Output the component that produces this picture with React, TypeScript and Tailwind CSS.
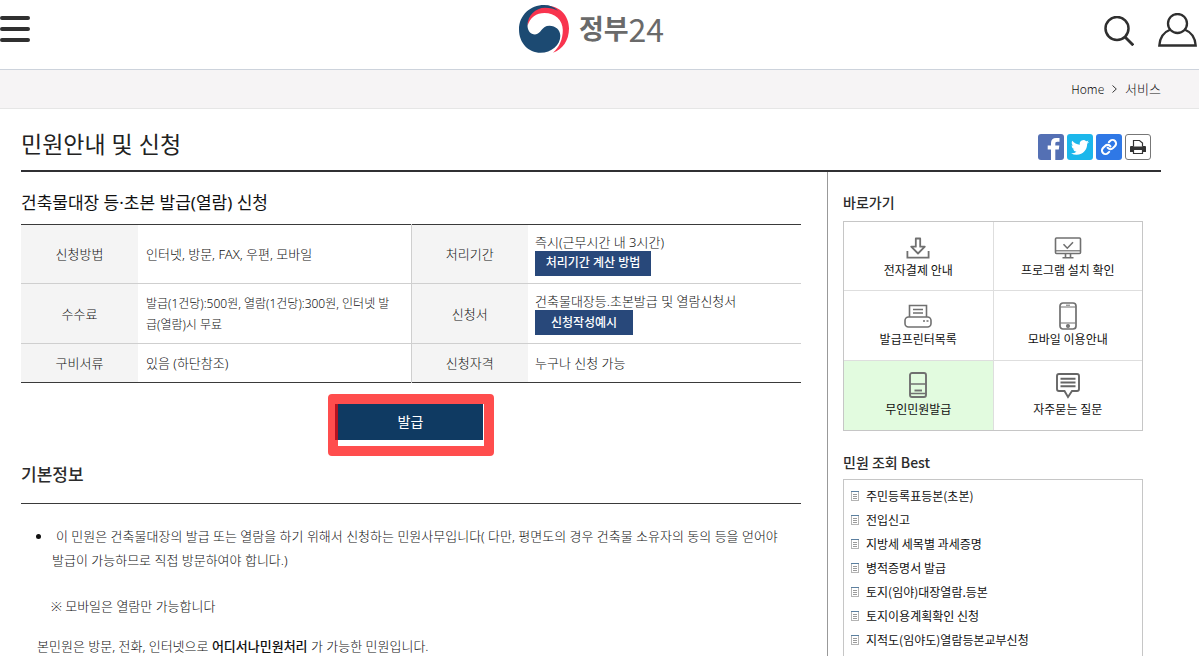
import React from "react";

const tiles = [
  { label: "전자결제 안내", icon: <DownloadIcon /> },
  { label: "프로그램 설치 확인", icon: <MonitorIcon /> },
  { label: "발급프린터목록", icon: <PrinterIcon /> },
  { label: "모바일 이용안내", icon: <MobileIcon /> },
  { label: "무인민원발급", icon: <KioskIcon />, active: true },
  { label: "자주묻는 질문", icon: <FaqIcon /> },
];

const best = [
  "주민등록표등본(초본)",
  "전입신고",
  "지방세 세목별 과세증명",
  "병적증명서 발급",
  "토지(임야)대장열람.등본",
  "토지이용계획확인 신청",
  "지적도(임야도)열람등본교부신청",
];

function DownloadIcon() {
  return (
    <svg width="24" height="24" viewBox="0 -2 24 24" fill="none" stroke="#707070" strokeWidth="1.8">
      <path d="M1.4 14v6.6h21.2V14" />
      <path d="M9.8 1.500h4.400v8.200h4.600L12 16.500l-6.800-6.800h4.600z" strokeLinejoin="round" />
    </svg>
  );
}

function MonitorIcon() {
  return (
    <svg width="28" height="24" viewBox="0 -2 28 24" fill="none" stroke="#707070" strokeWidth="1.6">
      <rect x="1.500" y="1" width="25" height="15.500" rx="1" />
      <path d="M1.500 13.800h25" strokeWidth="1.200" />
      <path d="M9.500 7.200l3.800 4 5.700-6" />
      <path d="M11.500 17v3.500M16.500 17v3.500M8.500 20.700h11" />
    </svg>
  );
}

function PrinterIcon() {
  return (
    <svg width="28" height="24" viewBox="0 0 28 24" fill="none" stroke="#707070" strokeWidth="1.600">
      <path d="M5.500 13V1.500h17V13" />
      <path d="M9 5.500h10M9 9h10" />
      <rect x="1" y="13" width="26" height="10" rx="3.500" />
      <path d="M19 17h2M22.500 17h2" />
    </svg>
  );
}

function MobileIcon() {
  return (
    <svg width="18" height="28" viewBox="0 0 18 28" fill="none" stroke="#707070" strokeWidth="1.700">
      <rect x="1" y="1" width="16" height="26" rx="3" />
      <path d="M1.500 5h15M1.500 21h15" strokeWidth="1.200" />
      <path d="M7 3.200h4" strokeWidth="1" />
      <circle cx="9" cy="24" r="1.200" />
    </svg>
  );
}

function KioskIcon() {
  return (
    <svg width="20" height="28" viewBox="0 0 20 28" fill="none" stroke="#707070" strokeWidth="1.900">
      <rect x="2" y="1" width="16" height="24" rx="2" />
      <path d="M2 12h16M2 21.500h16" strokeWidth="1.500" />
      <path d="M6.500 18.500h7.500" />
    </svg>
  );
}

function FaqIcon() {
  return (
    <svg width="26" height="28" viewBox="0 0 26 28" fill="none" stroke="#666" strokeWidth="1.900">
      <path d="M4 2h18a2 2 0 0 1 2 2v13a2 2 0 0 1-2 2h-5L13 25 9.500 19H4a2 2 0 0 1-2-2V4a2 2 0 0 1 2-2z" />
      <path d="M5.500 6.700h15M5.500 10.500h15M5.500 14.300h15" />
    </svg>
  );
}

function Emblem() {
  return (
    <svg width="50" height="48" viewBox="0 0 50 48" aria-hidden="true">
      <path d="M8 10C13 3.500 20 .8 28 .8 40.500.8 50 10.500 50 23.500c0 12-6.500 21-16 24.300C40.500 42 43.800 34 43.800 25 43.800 15 36 7.900 25.500 7.900 17.500 7.900 11 12 8.500 21z" fill="#f8344e" />
      <path d="M25 0C11.500 0 0 10 0 24.500 0 38 9.500 47.800 21.500 47.800 32.500 47.800 41.300 40 41.300 31c0-6-4.800-10.200-10.800-10.200-8 0-8.500 8.700-14.500 8.700-4.500 0-7.500-4-7.500-9C8.500 10.500 16.500 2.700 26 2.700c5 0 9.500 1 13 3C35.500 2 30.500 0 25 0z" fill="#1c4a72" />
    </svg>
  );
}

function LineIcon() {
  return (
    <svg width="8" height="10" viewBox="0 0 8 10" shapeRendering="crispEdges" aria-hidden="true">
      <path d="M0 0h8v10H0z" fill="#b4b4b4" />
      <path d="M1 1h6v8H1z" fill="#fff" />
      <path d="M0 0h8v1H0z" fill="#5b7f9f" />
      <path d="M2 3h4v1H2zM2 5h4v1H2zM2 7h4v1H2z" fill="#9a9a9a" />
    </svg>
  );
}

function Th({ children }: { children: React.ReactNode }) {
  return (
    <th scope="row" className="bg-[#f4f4f4] text-center font-light">
      {children}
    </th>
  );
}

function Td({ children, divided }: { children: React.ReactNode; divided?: boolean }) {
  return <td className={divided ? "border-r border-[#cfcfcf] px-2" : "px-[7px]"}>{children}</td>;
}

const smallButton = "block h-[25px] bg-[#28487a] text-xs leading-none font-medium text-white";

export default function App() {
  return (
    <div className="min-h-screen bg-white font-['Noto_Sans','Noto_Sans_CJK_KR',sans-serif] text-[13px] leading-5 font-light text-[#111]">
      <header className="flex h-[70px] items-start justify-between border-b border-[#cdd3dc]">
        <div className="flex flex-1">
          <button type="button" aria-label="메뉴" className="mt-4 flex w-[30px] flex-col gap-[7px]">
            <span className="h-1 w-full rounded-sm bg-[#303030]" />
            <span className="h-1 w-full rounded-sm bg-[#303030]" />
            <span className="h-1 w-full rounded-sm bg-[#303030]" />
          </button>
        </div>
        <a href="#" className="mr-[14px] flex items-start gap-[10px] pt-[5px] font-['Noto_Sans_CJK_KR',sans-serif] font-bold text-[#6a6a6a]">
          <Emblem />
          <span className="flex items-center">
            <span className="text-[27px] leading-[46px]">정부</span>
            <span className="text-[32px] leading-[46px] font-normal">24</span>
          </span>
        </a>
        <div className="flex flex-1 justify-end gap-6 pr-[2px]">
          <button type="button" aria-label="검색" className="mt-4 h-[30px]">
            <svg width="30" height="30" viewBox="0 0 30 30" fill="none" stroke="#2f2f2f" strokeWidth="2.500">
              <circle cx="13" cy="12.500" r="11.500" />
              <path d="M21 21l8.300 8.300" strokeWidth="2.800" />
            </svg>
          </button>
          <button type="button" aria-label="로그인" className="mt-[13px] h-[34px]">
            <svg width="39" height="34" viewBox="0 0 39 34" fill="none" stroke="#2f2f2f" strokeWidth="2.300">
              <circle cx="19.500" cy="10.500" r="9.500" />
              <path d="M12.500 16.500C6 19 1.800 25 1.300 32.500h36.400C37.200 25 33 19 26.500 16.500" />
            </svg>
          </button>
        </div>
      </header>

      <nav aria-label="현재 위치" className="flex h-[39px] items-center justify-end gap-2 border-b border-[#e6e6e6] bg-[#f6f4f5] pr-[38px] font-['Noto_Sans_CJK_KR',sans-serif]">
        <a href="#" className="text-xs">Home</a>
        <svg width="5" height="8" viewBox="0 0 5 8" fill="none" stroke="#333">
          <path d="M.5.5L4.300 4 .5 7.500" />
        </svg>
        <a href="#">서비스</a>
      </nav>

      <main className="pr-[38px] pl-[21px]">
        <div className="flex h-[63px] items-center justify-between border-b-2 border-[#303033] pt-[15px] pr-[10px] text-[#222]">
          <h1 className="pb-[6px] text-[23px] leading-8 font-normal">민원안내 및 신청</h1>
          <div className="flex gap-[3px]">
            <a href="#" aria-label="페이스북">
              <svg width="26" height="26" viewBox="0 0 26 26">
                <rect width="26" height="26" rx="3" fill="#5470b4" />
                <path d="M13 26V15.500h-3.300v-4H13V9c0-3.300 2-5 5-5h3.500v3.800h-2.300c-1.400 0-1.900.7-1.900 1.900v1.800h4l-.5 4h-3.500V26z" fill="#fff" />
              </svg>
            </a>
            <a href="#" aria-label="트위터">
              <svg width="26" height="26" viewBox="0 0 26 26">
                <rect width="26" height="26" rx="3" fill="#1cb7eb" />
                <path transform="translate(4 4.500) scale(.75)" d="M23.950 4.570a10 10 0 0 1-2.820.77 4.960 4.960 0 0 0 2.160-2.720c-.95.550-2 .95-3.130 1.180a4.920 4.920 0 0 0-8.380 4.480C7.690 8.090 4.070 6.130 1.640 3.160a4.820 4.820 0 0 0-.67 2.480c0 1.710.87 3.210 2.190 4.100a4.900 4.900 0 0 1-2.230-.62v.06a4.920 4.920 0 0 0 3.950 4.830 5 5 0 0 1-2.210.08 4.940 4.940 0 0 0 4.600 3.420A9.870 9.870 0 0 1 0 19.540a14 14 0 0 0 7.550 2.210c9.050 0 14-7.500 14-13.980 0-.21 0-.42-.02-.63a9.940 9.940 0 0 0 2.460-2.550z" fill="#fff" />
              </svg>
            </a>
            <a href="#" aria-label="주소 복사">
              <svg width="26" height="26" viewBox="0 0 26 26" fill="none">
                <rect width="26" height="26" rx="3" fill="#2f78e6" />
                <g transform="translate(4.500 4.500) scale(.71)" stroke="#fff" strokeWidth="2.900" strokeLinecap="round">
                  <path d="M10 13a5 5 0 0 0 7.540.54l3-3a5 5 0 0 0-7.070-7.070l-1.720 1.710" />
                  <path d="M14 11a5 5 0 0 0-7.540-.54l-3 3a5 5 0 0 0 7.070 7.070l1.710-1.710" />
                </g>
              </svg>
            </a>
            <button type="button" aria-label="인쇄">
              <svg width="26" height="26" viewBox="0 0 26 26" fill="none">
                <rect x=".5" y=".5" width="25" height="25" rx="2.500" fill="#fff" stroke="#777" />
                <path d="M6 12h14a1 1 0 0 1 1 1v5H5v-5a1 1 0 0 1 1-1z" fill="#333" />
                <path d="M8.500 12.500v-6h6l3 2.500v3.500M8.500 15.500h9v4h-9z" fill="#fff" stroke="#333" strokeWidth="1.200" />
              </svg>
            </button>
          </div>
        </div>

        <div className="flex">
          <div className="min-w-0 flex-1 pr-[26px]">
            <h2 className="pt-[19px] pb-[9px] text-[17px] leading-6 font-normal">건축물대장 등·초본 발급(열람) 신청</h2>

            <table className="w-full table-fixed border-collapse border-y border-[#3a3a3a]">
              <colgroup>
                <col className="w-[15%]" />
                <col className="w-[35%]" />
                <col className="w-[15%]" />
                <col className="w-[35%]" />
              </colgroup>
              <tbody>
                <tr className="h-[59px] border-b border-[#cfcfcf]">
                  <Th>신청방법</Th>
                  <Td divided>인터넷, 방문, FAX, 우편, 모바일</Td>
                  <Th>처리기간</Th>
                  <Td>
                    <p className="leading-[18px]">즉시(근무시간 내 3시간)</p>
                    <button type="button" className={smallButton + " w-[116px]"}>처리기간 계산 방법</button>
                  </Td>
                </tr>
                <tr className="h-[60px] border-b border-[#cfcfcf]">
                  <Th>수수료</Th>
                  <Td divided>
                    <span className="text-xs leading-5 whitespace-nowrap">발급(1건당):500원, 열람(1건당):300원, 인터넷 발<br />급(열람)시 무료</span>
                  </Td>
                  <Th>신청서</Th>
                  <Td>
                    <p className="leading-[18px]">건축물대장등.초본발급 및 열람신청서</p>
                    <button type="button" className={smallButton + " w-[98px]"}>신청작성예시</button>
                  </Td>
                </tr>
                <tr className="h-[39px]">
                  <Th>구비서류</Th>
                  <Td divided>있음 (하단참조)</Td>
                  <Th>신청자격</Th>
                  <Td>누구나 신청 가능</Td>
                </tr>
              </tbody>
            </table>

            <div className="mx-auto mt-[11px] h-[62px] w-[166px] rounded border-10 border-[#ff4d4d]">
              <button type="button" className="-ml-[3px] block h-9 w-[148px] border-l-3 border-[#b5121f] bg-[#0f3a62] text-sm leading-none font-normal text-white">
                발급
              </button>
            </div>

            <h3 className="border-b border-[#3a3a3a] pt-[7px] pb-4 text-[17px] leading-6 font-medium text-[#2b2b2b]">기본정보</h3>

            <ul className="mt-5 list-disc pr-4 pl-[31px] leading-6 break-keep">
              <li className="indent-1">
                이 민원은 건축물대장의 발급 또는 열람을 하기 위해서 신청하는 민원사무입니다( 다만, 평면도의 경우 건축물 소유자의 동의 등을 얻어야 발급이 가능하므로 직접 방문하여야 합니다.)
              </li>
            </ul>
            <p className="mt-6 pl-[30px]">※ 모바일은 열람만 가능합니다</p>
            <p className="mt-5 pl-4">
              본민원은 방문, 전화, 인터넷으로 <strong className="font-medium">어디서나민원처리</strong> 가 가능한 민원입니다.
            </p>
          </div>

          <aside className="w-[334px] shrink-0 border-l border-[#999] pr-[18px] pl-[15px] font-['Noto_Sans_CJK_KR',sans-serif]">
            <h2 className="pt-5 pb-[9px] text-sm leading-5 font-medium text-[#2b2b2b]">바로가기</h2>
            <div className="grid grid-cols-2 grid-rows-[68px_69px_69px] gap-px border border-[#c6c6c6] bg-[#dedede]">
              {tiles.map((t) => (
                <a
                  key={t.label}
                  href="#"
                  className={
                    t.active
                      ? "flex flex-col items-center gap-px bg-[#e2fbdf] pt-[11px] text-xs leading-4 font-normal"
                      : "flex flex-col items-center gap-px bg-white pt-[11px] text-xs leading-4 font-normal"
                  }
                >
                  <span className="flex h-7 items-center">{t.icon}</span>
                  {t.label}
                </a>
              ))}
            </div>

            <h2 className="pt-[21px] pb-[7px] text-sm leading-5 font-medium text-[#2b2b2b]">민원 조회 Best</h2>
            <ul className="border border-b-0 border-[#c6c6c6] px-[7px] py-1 text-xs leading-6 font-normal">
              {best.map((b) => (
                <li key={b}>
                  <a href="#" className="flex items-center gap-[7px]">
                    <LineIcon />
                    {b}
                  </a>
                </li>
              ))}
            </ul>
          </aside>
        </div>
      </main>
    </div>
  );
}
